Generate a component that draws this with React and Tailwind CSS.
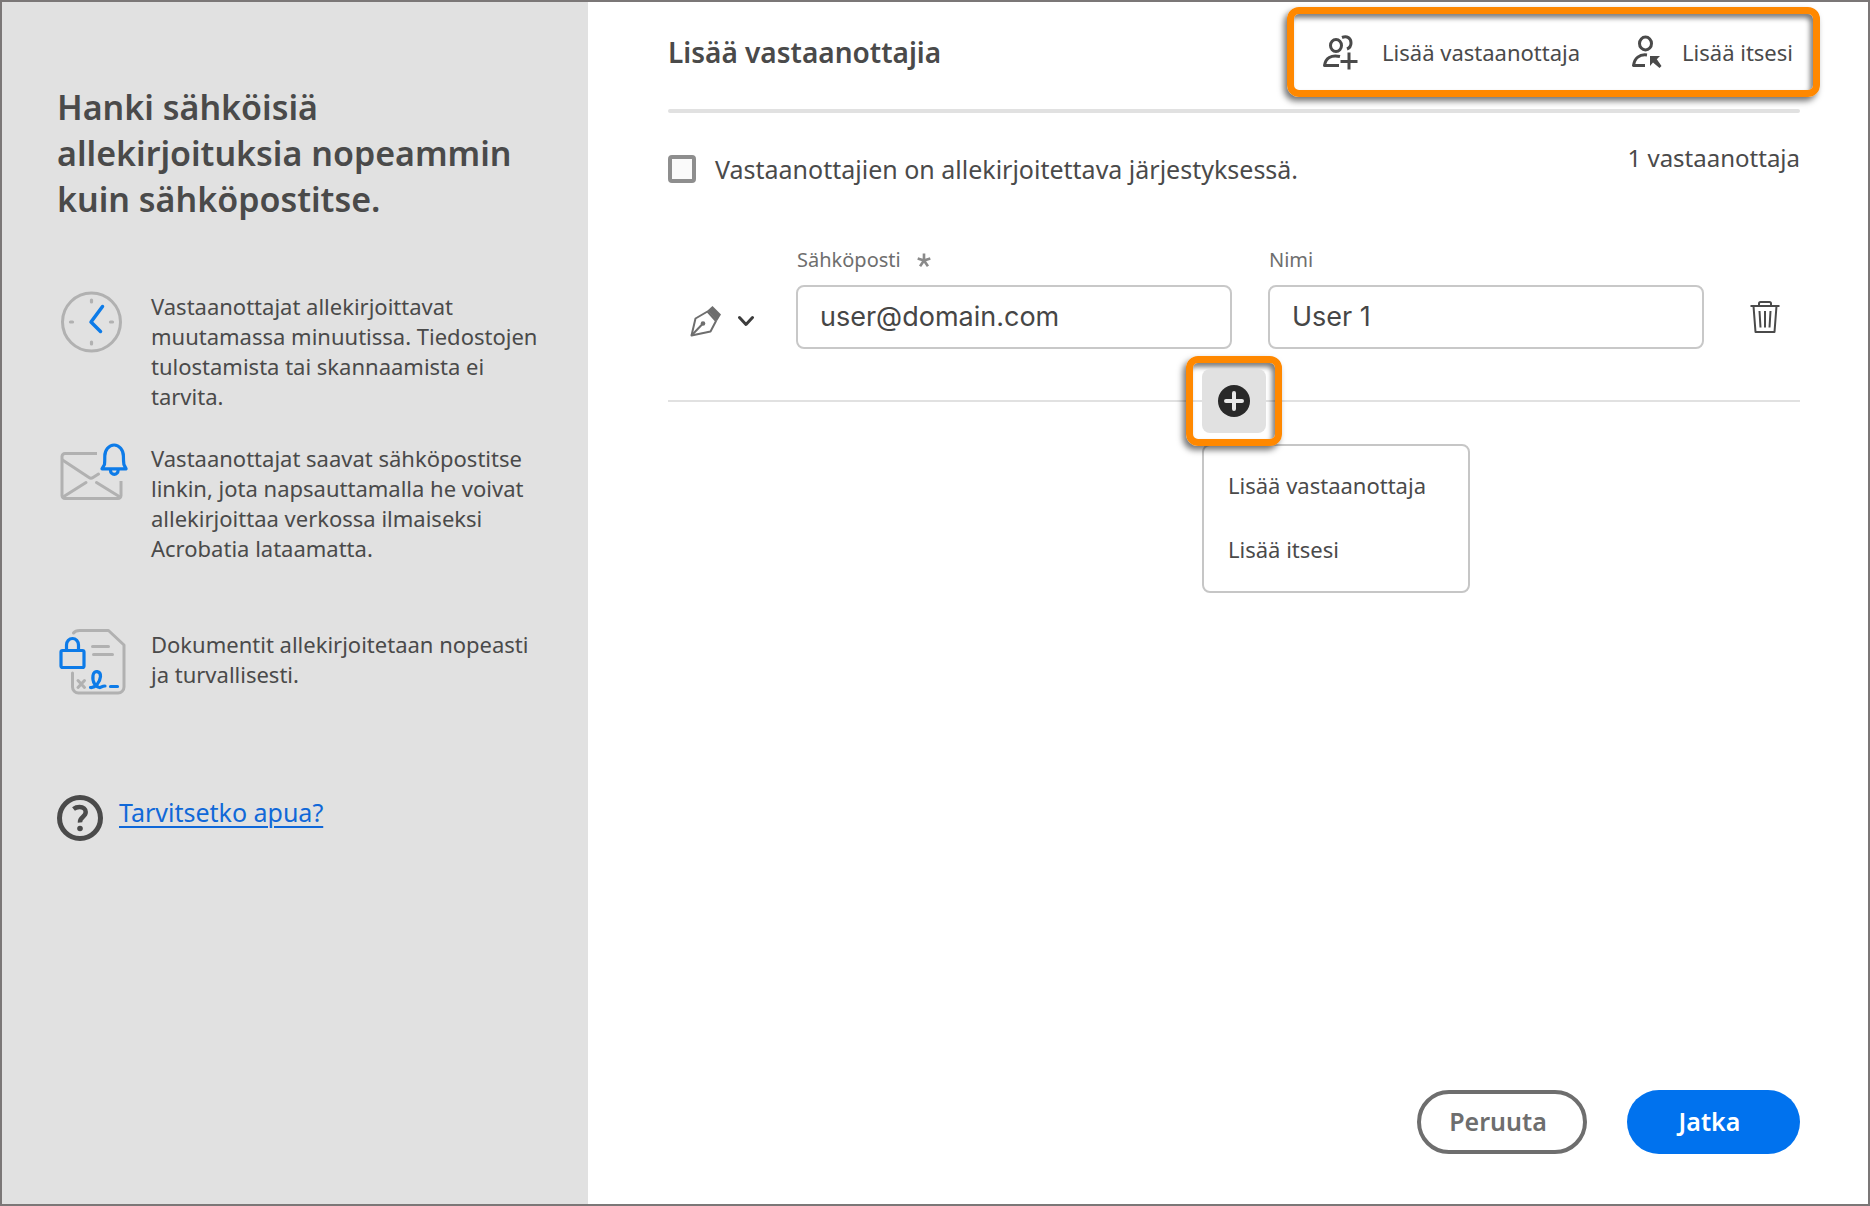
// src/pages/AddRecipients.jsx
import React, { useState } from 'react';

const ClockIcon = () => (
    <svg width="64" height="64" viewBox="0 0 64 64" fill="none" strokeLinecap="round" className="shrink-0" aria-hidden="true">
        <circle cx="32.500" cy="31" r="29" stroke="#b1b1b1" strokeWidth="3" />
        <path d="M32.500 9v2M32.500 51v2M11.500 31h2M51.500 31h2" stroke="#b1b1b1" strokeWidth="3.200" />
        <path d="M43.500 15.500L32 31l9.500 9.500" stroke="#0d7be8" strokeWidth="3.500" strokeLinejoin="round" />
    </svg>
);

const MailIcon = () => (
    <svg width="70" height="64" viewBox="0 0 70 64" fill="none" strokeLinecap="round" strokeLinejoin="round" className="shrink-0" aria-hidden="true">
        <g stroke="#b1b1b1" strokeWidth="3">
            <path d="M38 10.500H6a3 3 0 0 0-3 3v39a3 3 0 0 0 3 3h53a3 3 0 0 0 3-3V38" strokeLinecap="butt" />
            <path d="M3.500 17L30 34.500a3.500 3.500 0 0 0 4 0l5.500-3.500M4 54L27 39.500M37.500 39.500L61 54" />
        </g>
        <g stroke="#0d7be8" strokeWidth="3.200">
            <path d="M45.500 21.500c.3-3 .3-5 .3-8.500a9.300 11 0 0 1 18.600 0c0 3.500.1 5.500.500 8.500l2.200 4.300H43z" />
            <path d="M51.500 27.500a3.800 3.800 0 0 0 7.600 0" />
        </g>
    </svg>
);

const DocumentIcon = () => (
    <svg width="68" height="68" viewBox="0 0 68 68" fill="none" strokeLinecap="round" strokeLinejoin="round" className="shrink-0" aria-hidden="true">
        <g stroke="#b1b1b1" strokeWidth="3">
            <path d="M14.500 4C16 2 18 1.500 20.500 1.500h29L65 16v42a6 6 0 0 1-6 6H19.500a6 6 0 0 1-6-6V44" />
            <path d="M33.500 17.500h16M34.500 25.500h19" />
            <path d="M19 51.500l6.500 7M25.500 51.500L19 58.500" strokeWidth="3" />
        </g>
        <g stroke="#0d7be8" strokeWidth="3.200">
            <rect x="2" y="21.500" width="23" height="17" rx="1.500" />
            <path d="M7.500 21.500V16a6 6.500 0 0 1 12 0v5.500" />
            <path d="M31.500 58.500c5 .500 9.500-5.500 10-11 .300-5.500-6.500-7-7.500-1-1 7 3 11.500 6.500 12 2 .300 2-1.500 5.500-1.500M51.500 57.500h7" />
        </g>
    </svg>
);

const HelpIcon = () => (
    <svg width="46" height="46" viewBox="0 0 46 46" fill="none" className="shrink-0" aria-hidden="true">
        <circle cx="23" cy="23" r="20.500" stroke="#4a4a4a" strokeWidth="5" />
        <path d="M16.500 14c2-1.600 4-2 6-2 4 0 6.200 2 6.200 5 0 5.200-6.200 5-5.700 10.500" stroke="#4a4a4a" strokeWidth="4.500" />
        <circle cx="23" cy="33.500" r="2.800" fill="#4a4a4a" />
    </svg>
);

const AddUserIcon = () => (
    <svg width="36" height="36" viewBox="0 0 36 36" fill="none" stroke="#4a4a4a" strokeWidth="3" className="shrink-0" aria-hidden="true">
        <ellipse cx="14" cy="11.500" rx="5.500" ry="6" />
        <path d="M20 3.500c5-2 9 .500 9 5.500 0 3-1.500 5-4 6" />
        <path d="M18 22.500C9 20.500 3.500 24 2.500 31.500H17" strokeLinejoin="round" />
        <path d="M27 18.500v17M18.500 27.500h17" />
    </svg>
);

const AddSelfIcon = () => (
    <svg width="30" height="36" viewBox="0 0 30 36" fill="none" stroke="#4a4a4a" strokeWidth="3" className="shrink-0" aria-hidden="true">
        <ellipse cx="13.500" cy="9.500" rx="6" ry="6.500" />
        <path d="M15 21C7.500 20 2.500 24 1.500 31.500H13" strokeLinejoin="round" />
        <path d="M18 22h10l-3.200 3.200 4.700 6.800-2 2-6.500-5.500L18 32z" fill="#4a4a4a" stroke="none" />
    </svg>
);

const PenIcon = () => (
    <svg width="32" height="32" viewBox="0 0 32 32" fill="none" stroke="#6e6e6e" strokeWidth="2" strokeLinejoin="round" aria-hidden="true">
        <path d="M1.500 30.500L5.500 13.500 17.500 6.500l8.500 9.500-5.500 10.500z" />
        <path d="M1.500 30.500L12 19.500" />
        <circle cx="13" cy="18.500" r="2.300" fill="#6e6e6e" stroke="none" />
        <path d="M17.500 5.500L22.500 1 31 9.500 27 16z" fill="#6e6e6e" stroke="none" />
    </svg>
);

const TrashIcon = () => (
    <svg width="30" height="34" viewBox="0 0 30 34" fill="none" stroke="#4a4a4a" strokeWidth="2" strokeLinejoin="round" aria-hidden="true">
        <path d="M.5 6h29M9 6V3.500A1.500 1.500 0 0 1 10.500 2h9A1.500 1.500 0 0 1 21 3.500V6" />
        <path d="M3.500 6l2 26h19l2-26" />
        <path d="M9.500 11l1 16.500M15 11v16.500M20.500 11l-1 16.500" />
    </svg>
);

const FEATURES = [
    {
        icon: ClockIcon,
        text: 'Vastaanottajat allekirjoittavat muutamassa minuutissa. Tiedostojen tulostamista tai skannaamista ei tarvita.',
        className: '',
    },
    {
        icon: MailIcon,
        text: 'Vastaanottajat saavat sähköpostitse linkin, jota napsauttamalla he voivat allekirjoittaa verkossa ilmaiseksi Acrobatia lataamatta.',
        className: 'mt-8',
    },
    {
        icon: DocumentIcon,
        text: 'Dokumentit allekirjoitetaan nopeasti ja turvallisesti.',
        className: 'mt-[66px]',
    },
];

const HIGHLIGHT = 'border-[7px] border-[#ff8800] rounded-xl shadow-[-3px_4px_6px_rgba(0,0,0,0.55),inset_-3px_4px_5px_rgba(0,0,0,0.5)]';
const FIELD = 'w-full h-16 px-[22px] pb-0.5 border-2 border-[#c8c8c8] rounded-lg bg-white font-[Inter,sans-serif] text-[27px] text-[#464646] outline-none';

function Sidebar() {
    return (
        <aside className="w-[586px] shrink-0 bg-[#e1e1e1] pl-[55px] pr-9 pt-[82px]">
            <h1 className="text-[34px] leading-[46px] font-semibold">
                Hanki sähköisiä allekirjoituksia nopeammin kuin sähköpostitse.
            </h1>
            <ul className="mt-[69px]">
                {FEATURES.map(({ icon: Icon, text, className }) => (
                    <li key={text} className={`flex items-start ${className}`}>
                        <span className="w-[94px] shrink-0 pl-0.5"><Icon /></span>
                        <p className="text-[22px] leading-[30px]">{text}</p>
                    </li>
                ))}
            </ul>
            <div className="mt-[98px] flex items-start gap-4">
                <HelpIcon />
                <a href="#" className="text-[25px] leading-[34px] text-[#1068d8] underline decoration-2 underline-offset-4">Tarvitsetko apua?</a>
            </div>
        </aside>
    );
}

export default function AddRecipients() {
    const [ordered, setOrdered] = useState(false);
    const [email, setEmail] = useState('user@domain.com');
    const [name, setName] = useState('User 1');

    return (
        <div className="flex min-h-screen border-2 border-[#7b7777] bg-white font-['Noto_Sans',sans-serif] text-[#4a4a4a]">
            <Sidebar />
            <main className="flex-1 min-w-0 flex flex-col pl-20 pr-[68px] pt-[5px] pb-[50px]">
                <header className="flex items-center justify-between">
                    <h2 className="text-[28px] leading-10 font-semibold">Lisää vastaanottajia</h2>
                    <div className={`-mr-5 h-[90px] pl-7 pr-5 flex items-center gap-13 text-[22px] leading-[30px] ${HIGHLIGHT}`}>
                        <button type="button" className="flex items-center gap-6"><AddUserIcon />Lisää vastaanottaja</button>
                        <button type="button" className="flex items-center gap-5"><AddSelfIcon />Lisää itsesi</button>
                    </div>
                </header>
                <hr className="mt-3 h-1 border-0 rounded-full bg-[#e1e1e1]" />

                <div className="mt-7 flex items-start justify-between leading-[34px]">
                    <label className="pt-[11px] flex items-center gap-[19px] text-[25px]">
                        <input
                            type="checkbox"
                            checked={ordered}
                            onChange={(e) => setOrdered(e.target.checked)}
                            className="appearance-none size-7 border-4 border-[#8e8e8e] rounded-sm bg-[#fafafa] checked:bg-[#0072ee]"
                        />
                        Vastaanottajien on allekirjoitettava järjestyksessä.
                    </label>
                    <p className="text-2xl leading-[34px]">1 vastaanottaja</p>
                </div>

                <div className="mt-15 flex items-end">
                    <button type="button" aria-label="Rooli" className="w-32 h-16 shrink-0 pl-[22px] pt-2 flex items-center gap-4">
                        <PenIcon />
                        <svg width="18" height="12" viewBox="0 0 18 12" fill="none" stroke="#3c3c3c" strokeWidth="3" strokeLinecap="round" strokeLinejoin="round" aria-hidden="true">
                            <path d="M1.500 2.500l6.500 7 6.500-7" />
                        </svg>
                    </button>
                    <div className="flex-1 flex gap-9">
                        <div className="flex-1">
                            <label htmlFor="email" className="mb-[11px] pl-px flex items-center gap-4 text-xl leading-7 text-[#6e6e6e]">
                                Sähköposti
                                <svg width="14" height="15" viewBox="0 0 16 16" stroke="#8a8a8a" strokeWidth="3" aria-hidden="true">
                                    <path d="M8 8V0M8 8L.8 5.700M8 8l7.200-2.300M8 8l-4.500 6.500M8 8l4.500 6.500" />
                                </svg>
                            </label>
                            <input id="email" type="email" value={email} onChange={(e) => setEmail(e.target.value)} className={FIELD} />
                        </div>
                        <div className="flex-1">
                            <label htmlFor="name" className="mb-[11px] pl-px block text-xl leading-7 text-[#6e6e6e]">Nimi</label>
                            <input id="name" type="text" value={name} onChange={(e) => setName(e.target.value)} className={FIELD} />
                        </div>
                    </div>
                    <button type="button" aria-label="Poista" className="w-24 h-16 shrink-0 pl-[46px]"><TrashIcon /></button>
                </div>

                {/* Ajout d'un destinataire */}
                <div className="relative mt-[51px] h-0.5 bg-[#e1e1e1]">
                    <div className={`absolute z-10 left-1/2 top-1/2 -translate-1/2 w-24 h-[90px] flex items-center justify-center ${HIGHLIGHT}`}>
                        <button type="button" aria-label="Lisää" className="size-16 shrink-0 flex items-center justify-center rounded-lg bg-[#e1e1e1]">
                            <svg width="32" height="32" viewBox="0 0 32 32" aria-hidden="true">
                                <circle cx="16" cy="16" r="16" fill="#292929" />
                                <path d="M16 8v16M8 16h16" stroke="#e8e8e8" strokeWidth="4" strokeLinecap="round" />
                            </svg>
                        </button>
                    </div>
                    <div role="menu" className="absolute left-[calc(50%-32px)] top-11 w-[268px] h-[149px] px-6 pt-[7px] flex flex-col border-2 border-[#c6c6c6] rounded-lg bg-white text-[22px]">
                        <button type="button" role="menuitem" className="h-16 text-left">Lisää vastaanottaja</button>
                        <button type="button" role="menuitem" className="h-16 text-left">Lisää itsesi</button>
                    </div>
                </div>

                <footer className="mt-auto flex justify-end gap-10 text-[25px] font-semibold">
                    <button type="button" className="w-[170px] h-16 pr-2 rounded-full border-4 border-[#6e6e6e] text-[#6e6e6e]">Peruuta</button>
                    <button type="button" className="w-[173px] h-16 pr-2 rounded-full bg-[#0072ee] text-white">Jatka</button>
                </footer>
            </main>
        </div>
    );
}
